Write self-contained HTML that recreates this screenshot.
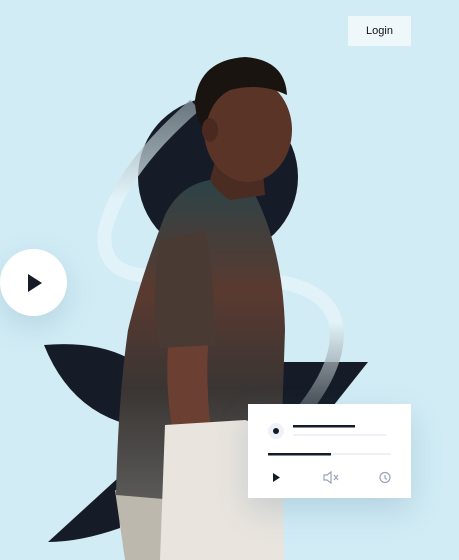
<!DOCTYPE html>
<html><head><style>
body{margin:0;width:459px;height:560px;overflow:hidden;background:#d1ecf5;font-family:"Liberation Sans",sans-serif;position:relative}
.login{position:absolute;left:348px;top:16px;width:63px;height:30px;background:#eef8fb;font-size:11px;color:#111;text-align:center;line-height:30px}
.play{position:absolute;left:0;top:249px;width:67px;height:67px;border-radius:50%;background:#fff;box-shadow:0 10px 30px rgba(60,110,140,.18)}
.card{position:absolute;left:248px;top:404px;width:163px;height:94px;background:#fff;box-shadow:0 12px 30px rgba(60,110,140,.2)}
</style></head><body>
<svg width="459" height="560" style="position:absolute;left:0;top:0">
<defs>
<linearGradient id="shirt" x1="0" y1="0" x2="0" y2="1"><stop offset="0" stop-color="#2d4347"/><stop offset=".35" stop-color="#5a3a30"/><stop offset=".65" stop-color="#3a3533"/><stop offset="1" stop-color="#5a5a58"/></linearGradient>
<linearGradient id="rib" x1="0" y1="0" x2="0" y2="1"><stop offset="0" stop-color="#8a98a0"/><stop offset=".3" stop-color="#e6f4f9"/><stop offset=".7" stop-color="#e6f4f9"/><stop offset="1" stop-color="#4a5258"/></linearGradient>
</defs>
<circle cx="218" cy="177" r="80" fill="#151c27"/>
<path d="M44 345 Q100 340 135 362 L130 425 Q70 410 44 345Z" fill="#151c27"/>
<path d="M48 542 L118 478 L120 528 Q80 542 48 542Z" fill="#151c27"/>
<path d="M280 362 L368 362 L322 420 L280 420Z" fill="#151c27"/>
<path d="M195 105 Q120 170 105 230 Q100 270 140 275 L200 280 Q320 270 335 320 Q345 360 300 415" fill="none" stroke="url(#rib)" stroke-width="14" opacity=".75"/>
<!-- legs/pants -->
<path d="M115 490 L175 490 L170 560 L125 560Z" fill="#bdb8ae"/>
<!-- torso -->
<path d="M210 180 Q180 185 165 215 Q140 280 128 330 Q118 400 116 495 L175 500 L280 480 L285 330 Q283 250 255 195 Z" fill="url(#shirt)"/>
<!-- arm -->
<path d="M168 345 Q165 400 175 440 Q185 490 205 540 L215 560 L240 560 Q225 500 215 460 Q205 400 208 345Z" fill="#6b4032"/>
<!-- sleeve -->
<path d="M160 240 Q150 300 160 348 L215 345 Q215 280 205 230Z" fill="#4a3a34"/>
<!-- laptop -->
<path d="M165 425 L245 420 L282 430 L284 560 L160 560Z" fill="#e9e4de"/>
<!-- neck & head -->
<path d="M218 150 L262 160 L265 195 L230 200 Q215 190 210 180Z" fill="#4a2c22"/>
<ellipse cx="248" cy="130" rx="44" ry="52" fill="#5a3527"/>
<path d="M195 100 Q200 60 245 57 Q285 60 287 95 Q260 82 230 90 Q210 100 205 130 Q195 120 195 100Z" fill="#1a1410"/>
<ellipse cx="210" cy="130" rx="8" ry="12" fill="#4a2a20"/>
<!-- play -->
</svg>
<div class="login">Login</div>
<div class="play"><svg width="67" height="67"><path d="M28 275 L42 284 L28 293Z" transform="translate(0,-250)" fill="#151c27"/></svg></div>
<div class="card">
<svg width="163" height="94">
<circle cx="28" cy="27" r="8" fill="#eef2f8"/><circle cx="28" cy="27" r="3" fill="#151c27"/>
<rect x="45" y="21" width="62" height="2.5" fill="#151c27"/>
<rect x="45" y="30" width="93" height="2" fill="#eef2f8"/>
<rect x="20" y="49" width="63" height="2.5" fill="#151c27"/>
<rect x="83" y="49" width="60" height="2" fill="#eef2f8"/>
<path d="M25 69 L32 73.5 L25 78Z" fill="#151c27"/>
<path d="M76 71 L79 71 L83 68 L83 79 L79 76 L76 76Z M86 71 L90 76 M90 71 L86 76" fill="none" stroke="#9aa3b8" stroke-width="1.2"/>
<circle cx="137" cy="73.5" r="5" fill="none" stroke="#9aa3b8" stroke-width="1.2"/>
<path d="M137 71 L137 74 L139 75.5" fill="none" stroke="#9aa3b8" stroke-width="1.2"/>
</svg>
</div>
</body></html>
